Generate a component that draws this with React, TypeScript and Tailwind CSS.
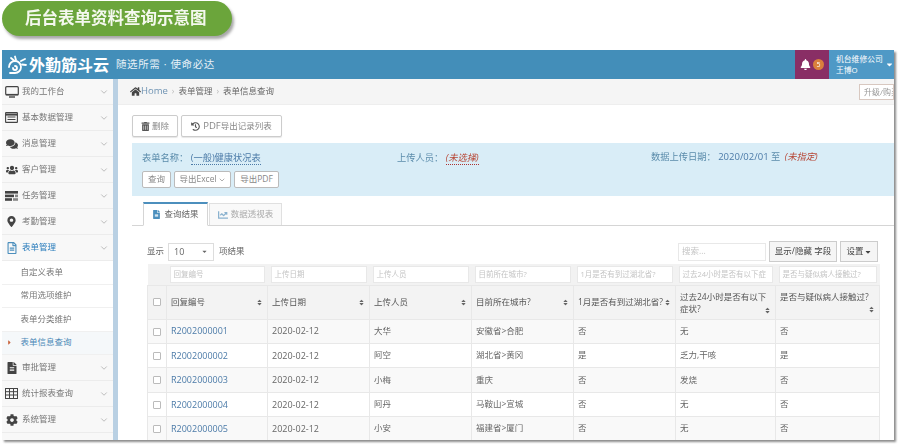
import { ChevronDown } from "lucide-react";
import {
  FaBell,
  FaCaretDown,
  FaCaretRight,
  FaChartLine,
  FaCog,
  FaComments,
  FaFileAlt,
  FaHistory,
  FaHome,
  FaMapMarkerAlt,
  FaRegFileAlt,
  FaSort,
  FaTrashAlt,
  FaUsers,
} from "react-icons/fa";

const font = { fontFamily: '"Open Sans", "Noto Sans CJK SC", sans-serif' };

function DesktopIcon() {
  return (
    <svg width="14" height="12" viewBox="0 0 14 12" fill="none" stroke="#444">
      <rect x="0.7" y="0.7" width="12.6" height="8" rx="1" strokeWidth="1.2" />
      <path d="M0.7 8.7h12.6" strokeWidth="1.6" />
      <path d="M4 11h6" strokeWidth="1.4" />
    </svg>
  );
}

function ListIcon() {
  return (
    <svg width="13" height="11" viewBox="0 0 13 11" fill="none" stroke="#444">
      <rect x="0.6" y="0.6" width="11.8" height="9.8" rx="0.5" strokeWidth="1.1" />
      <path d="M0.6 2.6h11.8" strokeWidth="2" />
      <path d="M2.5 5h8M2.5 7.5h8" strokeWidth="1" />
    </svg>
  );
}

function TasksIcon() {
  return (
    <svg width="13" height="10" viewBox="0 0 13 10" fill="#444">
      <rect width="13" height="2.6" />
      <rect y="3.6" width="9" height="2.6" />
      <rect x="10" y="3.6" width="3" height="2.6" fill="#888" />
      <rect y="7.2" width="7" height="2.6" />
      <rect x="8" y="7.2" width="5" height="2.6" fill="#888" />
    </svg>
  );
}

function GridIcon() {
  return (
    <svg width="13" height="11" viewBox="0 0 13 11" fill="none" stroke="#444" strokeWidth="1">
      <rect x="0.5" y="0.5" width="12" height="10" />
      <path d="M0.5 3.7h12M0.5 7h12M4.5 0.5v10M8.5 0.5v10" />
    </svg>
  );
}

const menuTop = [
  { icon: <DesktopIcon />, label: "我的工作台" },
  { icon: <ListIcon />, label: "基本数据管理" },
  { icon: <FaComments />, label: "消息管理" },
  { icon: <FaUsers />, label: "客户管理" },
  { icon: <TasksIcon />, label: "任务管理" },
  { icon: <FaMapMarkerAlt className="text-[11px]" />, label: "考勤管理" },
];

const menuBottom = [
  { icon: <FaFileAlt className="text-[12px]" />, label: "审批管理" },
  { icon: <GridIcon />, label: "统计报表查询" },
  { icon: <FaCog className="text-[12px]" />, label: "系统管理" },
];

const subMenu = ["自定义表单", "常用选项维护", "表单分类维护", "表单信息查询"];

const columns = [
  { label: "回复编号", filter: "回复编号", width: "w-[101px]" },
  { label: "上传日期", filter: "上传日期", width: "w-[102px]" },
  { label: "上传人员", filter: "上传人员", width: "w-[102px]" },
  { label: "目前所在城市?", filter: "目前所在城市?", width: "w-[102px]" },
  { label: "1月是否有到过湖北省?", filter: "1月是否有到过湖北省?", width: "w-[102px]" },
  { label: "过去24小时是否有以下症状?", filter: "过去24小时是否有以下症", width: "w-[100px]" },
  { label: "是否与疑似病人接触过?", filter: "是否与疑似病人接触过?", width: "w-[104px]" },
];

const rows = [
  ["R2002000001", "2020-02-12", "大华", "安徽省>合肥", "否", "无", "否"],
  ["R2002000002", "2020-02-12", "阿空", "湖北省>黄冈", "是", "乏力,干咳", "是"],
  ["R2002000003", "2020-02-12", "小梅", "重庆", "否", "发烧", "否"],
  ["R2002000004", "2020-02-12", "阿丹", "马鞍山>宣城", "否", "无", "否"],
  ["R2002000005", "2020-02-12", "小安", "福建省>厦门", "否", "无", "否"],
];

function MenuItem({ icon, label, active }: { icon: React.ReactNode; label: string; active?: boolean }) {
  return (
    <div className={`flex h-[26px] items-center border-b border-[#ececec] bg-[#f8f8f8] pl-[2px] pr-[3px] ${active ? "text-[#2b7dbc]" : "text-[#777]"}`}>
      <span className={`flex w-[15px] justify-center text-[12px] ${active ? "text-[#4c8fbd]" : "text-[#444]"}`}>{icon}</span>
      <span className="ml-[3px] flex-1 text-[8.5px] whitespace-nowrap">{label}</span>
      <ChevronDown className="mr-[1px] h-[10px] w-[10px] text-[#999]" strokeWidth={1.5} />
    </div>
  );
}

function Sidebar() {
  return (
    <div className="w-[111px] shrink-0 bg-[#f8f8f8]">
      {menuTop.map((m) => (
        <MenuItem key={m.label} icon={m.icon} label={m.label} />
      ))}
      <MenuItem icon={<FaRegFileAlt />} label="表单管理" active />
      <div className="bg-white">
        {subMenu.map((s, i) => (
          <div
            key={s}
            className={`flex h-[23.5px] items-center border-b border-[#f0f0f0] pl-[18.5px] text-[8.5px] whitespace-nowrap ${i === 3 ? "relative bg-[#f5f8fa] text-[#4b88b7]" : "text-[#777]"}`}
          >
            {i === 3 && <FaCaretRight className="absolute left-[4px] text-[7px] text-[#c86139]" />}
            {s}
          </div>
        ))}
      </div>
      {menuBottom.map((m) => (
        <MenuItem key={m.label} icon={m.icon} label={m.label} />
      ))}
    </div>
  );
}

function DataTable() {
  return (
    <table className="w-[732px] table-fixed border-collapse text-[8.5px] text-[#666]">
      <thead>
        <tr className="h-[21px] bg-[#f2f2f2]">
          <th className="w-[19px]" />
          {columns.map((c) => (
            <th key={c.label} className={`${c.width} px-[3px] font-normal`}>
              <div className="flex h-[17px] items-center overflow-hidden border border-[#e8e8e8] bg-white pl-[3px] text-[7.5px] whitespace-nowrap text-[#c4c4c4]">
                {c.filter}
              </div>
            </th>
          ))}
        </tr>
        <tr className="h-[34px] bg-[#f3f3f3] text-[#555]">
          <th className="border border-[#e8e8e8] text-center">
            <span className="inline-block h-[8px] w-[8px] rounded-[1px] border border-[#bbb] bg-white align-middle" />
          </th>
          {columns.map((c, i) => (
            <th key={c.label} className="border border-[#e8e8e8] px-[4px] text-left font-normal">
              <div className={i >= 5 ? "leading-[12.5px]" : "flex items-center justify-between whitespace-nowrap"}>
                <div className={i === 6 ? "whitespace-nowrap" : ""}>{c.label}</div>
                <FaSort
                  className={
                    i === 5
                      ? "-mt-[9px] ml-auto text-[7px] text-[#666]"
                      : i === 6
                        ? "mt-[2px] ml-auto text-[7px] text-[#666]"
                        : "shrink-0 text-[7px] text-[#666]"
                  }
                />
              </div>
            </th>
          ))}
        </tr>
      </thead>
      <tbody>
        {rows.map((r, ri) => (
          <tr key={r[0]} className={`h-[24.4px] ${ri % 2 === 0 ? "bg-[#f9f9f9]" : "bg-white"}`}>
            <td className="border border-[#e8e8e8] text-center">
              <span className="inline-block h-[8px] w-[8px] rounded-[1px] border border-[#bbb] bg-white align-middle" />
            </td>
            {r.map((cell, i) => (
              <td key={i} className={`border border-[#e8e8e8] px-[4px] whitespace-nowrap ${i === 0 ? "text-[9px] text-[#4c7ba8]" : i === 1 ? "text-[9px]" : ""}`}>
                {cell}
              </td>
            ))}
          </tr>
        ))}
      </tbody>
    </table>
  );
}

export default function App() {
  return (
    <div className="h-[446px] w-[900px] overflow-hidden bg-white" style={font}>
      {/* Title pill */}
      <div className="ml-[2px] mt-[1px] flex h-[35px] w-[230px] items-center rounded-full bg-[#6ba53b] pl-[23px] text-[16.5px] font-bold whitespace-nowrap text-[#f4f8ee] shadow-[2px_3px_3px_rgba(0,0,0,0.35)] blur-[0.3px]">
        后台表单资料查询示意图
      </div>

      {/* Window */}
      <div className="ml-[2px] mt-[14px] h-[390px] w-[892px] overflow-hidden shadow-[2px_2px_2px_rgba(0,0,0,0.45)] blur-[0.3px]">
        {/* Header */}
        <div className="flex h-[29px] items-center bg-[#438eb9] text-white">
          <div className="ml-[5px] flex items-center">
            <svg width="20" height="20" viewBox="0 0 20 20" fill="none" stroke="#fff" strokeWidth="1.8">
              <path d="M2 12a6 6 0 1 1 6 6H3" strokeLinecap="round" />
              <path d="M6 13a2 2 0 1 0 2-2" strokeLinecap="round" />
              <path d="M4 3l3 2.5M8 1.5l1 3.5M14 6l4-2M15 9.5l4 .5" strokeLinecap="round" />
            </svg>
            <span className="ml-[2px] text-[16px] font-bold whitespace-nowrap">外勤筋斗云</span>
            <span className="ml-[7px] text-[10.5px] tracking-[0.6px] whitespace-nowrap text-[#e8f1f7]">随选所需 · 使命必达</span>
          </div>
          <div className="ml-auto flex h-full w-[34px] items-center justify-center gap-[2px] bg-[#892e65]">
            <FaBell className="text-[11px]" />
            <span className="flex h-[11px] w-[11px] items-center justify-center rounded-full bg-[#d9803c] text-[7px] leading-none">5</span>
          </div>
          <div className="relative flex h-full w-[65px] flex-col justify-center bg-[#4f99c6] pl-[7px] text-[7.8px] leading-[11px] whitespace-nowrap">
            <span>机台维修公司</span>
            <span>王博O</span>
            <FaCaretDown className="absolute right-0 top-[10px] text-[9px]" />
          </div>
        </div>

        <div className="flex h-[361px]">
          <Sidebar />
          <div className="w-[5px] shrink-0 bg-[#b9d0e3]" />

          {/* Content */}
          <div className="min-w-0 flex-1 bg-white">
            {/* Breadcrumb */}
            <div className="flex h-[26px] items-center overflow-hidden border-b border-[#eee] bg-[#f5f5f5] pl-[12px] text-[8.5px] whitespace-nowrap text-[#666]">
              <FaHome className="text-[11px] text-[#444]" />
              <span className="text-[9.5px] text-[#6f93b3]">Home</span>
              <span className="mx-[4px] text-[#bbb]">›</span>
              <span>表单管理</span>
              <span className="mx-[4px] text-[#bbb]">›</span>
              <span>表单信息查询</span>
              <span className="ml-auto flex h-[16px] w-[35px] shrink-0 items-center overflow-hidden border border-[#d8c8c0] bg-white pl-[4px] text-[8px] text-[#999]">升级/购买</span>
            </div>

            {/* Toolbar */}
            <div className="ml-[14px] mt-[10px] flex gap-[3px] text-[8.5px] text-[#888]">
              <button className="flex h-[22px] w-[46px] items-center justify-center gap-[2px] rounded-[2px] border border-[#ccc] bg-white shadow-[0_1px_1px_rgba(0,0,0,0.1)]">
                <FaTrashAlt className="text-[9px] text-[#555]" />删除
              </button>
              <button className="flex h-[22px] w-[101px] items-center justify-center gap-[3px] rounded-[2px] border border-[#ccc] bg-white shadow-[0_1px_1px_rgba(0,0,0,0.1)] whitespace-nowrap">
                <FaHistory className="text-[9px] text-[#555]" />
                <span><span className="text-[9.5px]">PDF</span>导出记录列表</span>
              </button>
            </div>

            {/* Query info */}
            <div className="ml-[14px] mt-[6px] h-[53px] bg-[#d9edf7] pl-[10px] pt-[8px] text-[9.25px] text-[#5b8cab]">
              <div className="flex h-[13px] items-center whitespace-nowrap">
                <span className="w-[255px]">
                  表单名称： <span className="border-b border-dotted border-[#4c7ba8] text-[#4c7ba8]">(一般)健康状况表</span>
                </span>
                <span className="w-[254px]">
                  上传人员： <i className="border-b border-dotted border-[#a33] text-[#b74635]">(未选择)</i>
                </span>
                <span>
                  数据上传日期： <span className="text-[9.5px] text-[#4c7ba8]">2020/02/01</span> 至 <i className="ml-[2px] text-[#b74635]">(未指定)</i>
                </span>
              </div>
              <div className="mt-[7px] flex gap-[3px] text-[8.5px] text-[#888]">
                <button className="h-[17px] w-[29px] rounded-[2px] border border-[#bbb] bg-white">查询</button>
                <button className="flex h-[17px] w-[57px] items-center justify-center gap-[1px] rounded-[2px] border border-[#bbb] bg-white whitespace-nowrap">
                  导出Excel<ChevronDown className="h-[8px] w-[8px]" />
                </button>
                <button className="h-[17px] w-[45px] rounded-[2px] border border-[#bbb] bg-white whitespace-nowrap">导出PDF</button>
              </div>
            </div>

            {/* Tabs */}
            <div className="ml-[14px] mt-[7px] flex h-[23px] items-end border-b border-[#d5d5d5] pl-[11px] text-[8.5px] whitespace-nowrap">
              <div className="-mb-px flex h-[24px] w-[65px] items-center justify-center gap-[3px] border-x border-b border-t-2 border-[#d5d5d5] border-b-white border-t-[#4c8fbd] bg-white text-[#666]">
                <FaFileAlt className="text-[9px] text-[#4c8fbd]" />查询结果
              </div>
              <div className="ml-[1px] flex h-[22px] w-[73px] items-center justify-center gap-[3px] border-x border-t border-[#e0e0e0] bg-[#f9f9f9] text-[#aaa]">
                <FaChartLine className="text-[10px] text-[#8ab2cf]" />数据透视表
              </div>
            </div>

            {/* Table controls */}
            <div className="mt-[15px] flex h-[21px] items-center pl-[29px] text-[8.5px] text-[#666]">
              <span>显示</span>
              <span className="ml-[4px] flex h-[18px] w-[46px] items-center justify-between border border-[#ddd] px-[5px] text-[9px]">
                10
                <FaCaretDown className="text-[7px]" />
              </span>
              <span className="ml-[5px]">项结果</span>
              <span className="ml-auto flex h-[18px] w-[88px] items-center border border-[#e8e8e8] pl-[3px] text-[#c4c4c4]">搜索...</span>
              <button className="ml-[3px] h-[21px] w-[68px] border border-[#ccc] bg-[#f5f5f5] text-[#444] whitespace-nowrap">显示/隐藏 字段</button>
              <button className="ml-[3px] flex h-[21px] w-[38px] items-center justify-center border border-[#ccc] bg-[#f5f5f5] text-[#444] whitespace-nowrap">
                设置<FaCaretDown className="text-[8px]" />
              </button>
              <span className="w-[16px] shrink-0" />
            </div>

            <div className="ml-[29px] mt-[2px]">
              <DataTable />
            </div>
          </div>
        </div>
      </div>
    </div>
  );
}
